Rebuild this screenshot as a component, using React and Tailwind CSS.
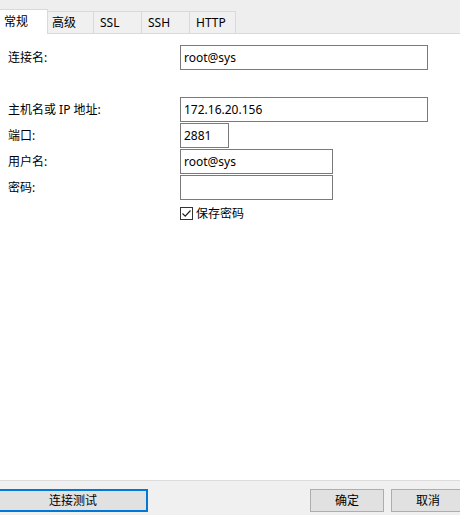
import React from "react";

const font = { fontFamily: '"Noto Sans", "Noto Sans CJK SC", sans-serif' };

function Row({ label, width, value, className = "" }) {
  return (
    <div className={"flex items-center h-[25px] " + className}>
      <div className="w-[180px] pl-[8px] text-[12px] text-black leading-none">{label}</div>
      <div
        className="h-[25px] border border-[#7a7a7a] bg-white flex items-center pl-[3px] text-[12px] text-black leading-none"
        style={{ width }}
      >
        {value}
      </div>
    </div>
  );
}

export default function App() {
  return (
    <div className="w-[460px] h-[515px] flex flex-col bg-white overflow-hidden" style={font}>
      {/* tab strip */}
      <div className="h-[34px] flex items-end bg-[#eeeeee] shrink-0">
        <div className="w-[48px] h-[25px] bg-white border-t border-r border-[#d9d9d9] pl-[4px] flex items-center text-[12px] leading-none text-black">
          常规
        </div>
        <div className="w-[46px] h-[23px] bg-[#f0f0f0] border-t border-r border-b border-[#d9d9d9] pl-[4px] flex items-center text-[12px] leading-none text-black">
          高级
        </div>
        <div className="w-[48px] h-[23px] bg-[#f0f0f0] border-t border-r border-b border-[#d9d9d9] pl-[6px] flex items-center text-[12px] leading-none text-black">
          SSL
        </div>
        <div className="w-[48px] h-[23px] bg-[#f0f0f0] border-t border-r border-b border-[#d9d9d9] pl-[6px] flex items-center text-[12px] leading-none text-black">
          SSH
        </div>
        <div className="w-[46px] h-[23px] bg-[#f0f0f0] border-t border-r border-b border-[#d9d9d9] pl-[6px] flex items-center text-[12px] leading-none text-black">
          HTTP
        </div>
        <div className="flex-1 h-[1px] bg-[#d9d9d9]" />
      </div>

      {/* content */}
      <div className="flex-1 flex flex-col pt-[11px]">
        <Row label="连接名:" width="248px" value="root@sys" />
        <div className="flex flex-col gap-[1px] mt-[27px]">
          <Row label="主机名或 IP 地址:" width="248px" value="172.16.20.156" />
          <Row label="端口:" width="49px" value="2881" />
          <Row label="用户名:" width="153px" value="root@sys" />
          <Row label="密码:" width="153px" value="" />
        </div>
        <div className="flex items-center h-[15px] mt-[6px] pl-[180px]">
          <div className="w-[13px] h-[13px] border border-[#333333] bg-white flex items-center justify-center">
            <svg width="11" height="11" viewBox="0 0 11 11">
              <path d="M1.5 5.5 L4.2 8.2 L9.5 2.5" fill="none" stroke="#222" strokeWidth="1.2" />
            </svg>
          </div>
          <span className="ml-[3px] text-[12px] leading-none text-black">保存密码</span>
        </div>
      </div>

      {/* bottom bar */}
      <div className="h-[35px] shrink-0 bg-[#f0f0f0] border-t border-[#dcdcdc] flex items-start pt-[8px]">
        <button className="-ml-[2px] w-[150px] h-[23px] border-2 border-[#0078d7] bg-[#e1e1e1] text-[12px] leading-none text-black flex items-center justify-center">
          连接测试
        </button>
        <div className="flex-1" />
        <button className="w-[74px] h-[23px] border border-[#adadad] bg-[#e1e1e1] text-[12px] leading-none text-black flex items-center justify-center">
          确定
        </button>
        <button className="ml-[7px] w-[74px] h-[23px] shrink-0 -mr-[5px] border border-[#adadad] bg-[#e1e1e1] text-[12px] leading-none text-black flex items-center justify-center">
          取消
        </button>
      </div>
    </div>
  );
}
